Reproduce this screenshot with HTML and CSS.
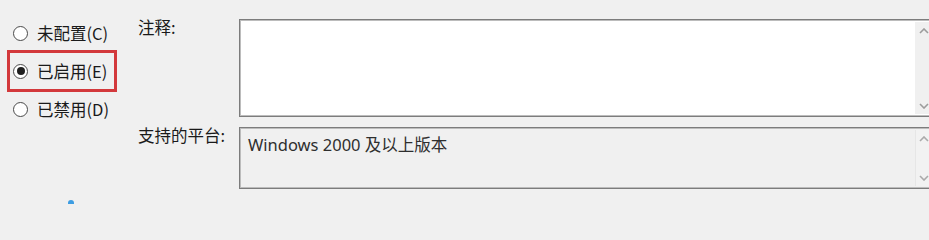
FILE: index.html
```html
<!DOCTYPE html>
<html lang="zh-CN">
<head>
<meta charset="utf-8">
<title>策略设置</title>
<link rel="stylesheet" href="styles.css">
</head>
<body>
<div class="dialog">
  <div class="main">
    <div class="options">
      <label class="opt"><span class="radio"></span><span class="opt-text">未配置(C)</span></label>
      <label class="opt opt-selected"><span class="radio radio-checked"></span><span class="opt-text">已启用(E)</span></label>
      <label class="opt"><span class="radio"></span><span class="opt-text">已禁用(D)</span></label>
    </div>
    <div class="fields">
      <div class="label">注释:</div>
      <div class="box box-comment">
        <div class="box-content"></div>
        <div class="scrollbar">
          <svg class="chev" viewBox="0 0 10 6" width="10" height="6"><path d="M1 5 L5 1 L9 5" fill="none" stroke="#9c9c9c" stroke-width="1.6"/></svg>
          <svg class="chev" viewBox="0 0 10 6" width="10" height="6"><path d="M1 1 L5 5 L9 1" fill="none" stroke="#9c9c9c" stroke-width="1.6"/></svg>
        </div>
      </div>
      <div class="label label-platform">支持的平台:</div>
      <div class="box box-platform">
        <div class="box-content platform-text">Windows 2000 及以上版本</div>
        <div class="scrollbar scrollbar-ro">
          <svg class="chev" viewBox="0 0 10 6" width="10" height="6"><path d="M1 5 L5 1 L9 5" fill="none" stroke="#aaaaaa" stroke-width="1.6"/></svg>
          <svg class="chev" viewBox="0 0 10 6" width="10" height="6"><path d="M1 1 L5 5 L9 1" fill="none" stroke="#aaaaaa" stroke-width="1.6"/></svg>
        </div>
      </div>
    </div>
  </div>
  <div class="footer"><span class="peek"></span></div>
</div>
</body>
</html>
```

FILE: styles.css
```css
html {
  margin: 0;
  padding: 0;
  background: #f0f0f0;
  overflow: hidden;
}

body {
  margin: 0;
  padding: 0;
  width: 929px;
  height: 204px;
  overflow: hidden;
  background: #f0f0f0;
  font-family: "Noto Sans", "Noto Sans CJK SC", sans-serif;
  color: #1e1e1e;
}

.dialog {
  display: flex;
  flex-direction: column;
}

.main {
  display: flex;
  flex-direction: row;
}

.options {
  width: 138px;
  flex-shrink: 0;
  padding-top: 15px;
  display: flex;
  flex-direction: column;
  gap: 2px;
  box-sizing: border-box;
}

.opt {
  margin-left: 10px;
  width: 104px;
  height: 36px;
  display: flex;
  align-items: center;
  padding-left: 3px;
  box-sizing: border-box;
}

.opt-selected {
  outline: 3px solid #d3393c;
}

.radio {
  width: 15px;
  height: 15px;
  border: 1px solid #4a4a4a;
  border-radius: 50%;
  background: #ffffff;
  box-sizing: border-box;
  flex-shrink: 0;
  display: flex;
  align-items: center;
  justify-content: center;
}

.radio-checked::after {
  content: "";
  width: 8px;
  height: 8px;
  border-radius: 50%;
  background: #1f1f1f;
}

.opt-text {
  margin-left: 9px;
  font-family: "Noto Sans CJK SC", "Noto Sans", sans-serif;
  font-size: 16.5px;
  line-height: 18px;
  color: #1a1a1a;
  white-space: nowrap;
}

.fields {
  padding-top: 19px;
  display: grid;
  grid-template-columns: 101px 696px;
  row-gap: 10px;
  flex-shrink: 0;
}

.label {
  font-family: "Noto Sans CJK SC", "Noto Sans", sans-serif;
  font-size: 16.5px;
  line-height: 16px;
  color: #1a1a1a;
  white-space: nowrap;
}

.box {
  display: flex;
  border: 1px solid #7c7c7c;
  box-shadow: inset 0 0 0 1px #bcbcbc;
  box-sizing: border-box;
  padding: 2px;
}

.box-comment {
  height: 98px;
  background: #ffffff;
}

.box-platform {
  height: 62px;
  background: #f0f0f0;
}

.box-content {
  flex: 1;
}

.platform-text {
  padding: 5px 0 0 6px;
  font-size: 16.5px;
  line-height: 20px;
  color: #2e2e2e;
  white-space: nowrap;
}

.scrollbar {
  width: 17px;
  display: flex;
  flex-direction: column;
  justify-content: space-between;
  align-items: center;
  padding: 6px 0 5px;
  background: #f0f0f0;
  box-sizing: border-box;
}

.scrollbar-ro {
  background: #f2f2f2;
  border-left: 1px solid #e6e6e6;
}

.chev {
  display: block;
}

.footer {
  height: 15px;
  padding-left: 68px;
  padding-top: 10px;
  box-sizing: border-box;
  display: flex;
  align-items: flex-end;
}

.peek {
  width: 6px;
  height: 4px;
  background: #3d9de2;
  border-radius: 3px 3px 0 0;
}
```
